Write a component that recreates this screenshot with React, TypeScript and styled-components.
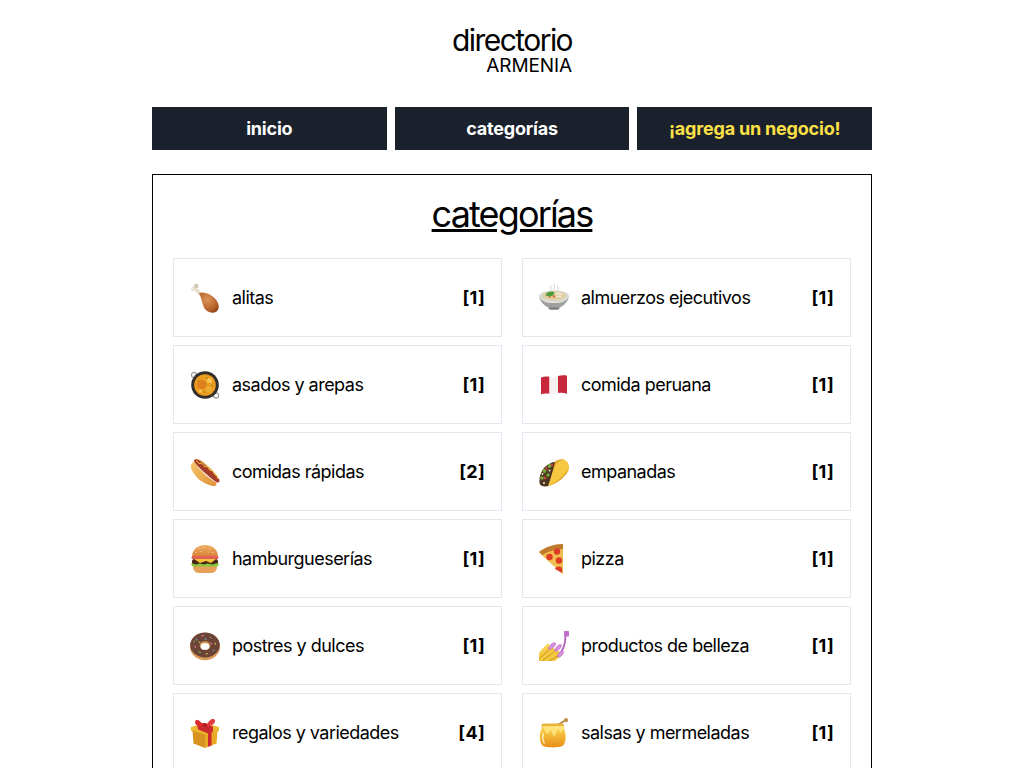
import React from "react";
import styled, { createGlobalStyle } from "styled-components";

const Global = createGlobalStyle`
  html, body { margin: 0; padding: 0; background: #fff; overflow: hidden; height: 768px; }
  body { font-family: Inter, "Liberation Sans", sans-serif; color: #000; }
  * { box-sizing: border-box; }
`;

const Page = styled.div`
  width: 720px;
  margin: 0 auto;
`;
const Header = styled.header`
  display: flex;
  justify-content: center;
  padding-top: 24px;
`;
const Brand = styled.a`
  display: flex;
  flex-direction: column;
  align-items: flex-end;
  color: #000;
  text-decoration: none;
`;
const BrandName = styled.span`
  font-size: 30px;
  line-height: 32px;
  letter-spacing: -1.55px;
`;
const BrandCity = styled.span`
  font-size: 19px;
  line-height: 19px;
  letter-spacing: -0.1px;
`;
const Nav = styled.nav`
  display: flex;
  gap: 8px;
  margin-top: 32px;
`;
const NavItem = styled.a<{ $accent?: boolean }>`
  flex: 1;
  height: 43px;
  display: flex;
  align-items: center;
  justify-content: center;
  background: #1a202c;
  color: ${(p) => (p.$accent ? "#fde047" : "#fff")};
  font-size: 18px;
  font-weight: 700;
  letter-spacing: -0.2px;
`;
const Panel = styled.main`
  margin-top: 24px;
  border: 1px solid #000;
  padding: 19px 20px 40px;
`;
const Title = styled.h1`
  margin: 0 0 24px;
  font-size: 36px;
  line-height: 40px;
  font-weight: 400;
  text-align: center;
  text-decoration: underline;
  letter-spacing: -1.85px;
`;
const Grid = styled.div`
  display: grid;
  grid-template-columns: 1fr 1fr;
  column-gap: 20px;
  row-gap: 8px;
`;
const Card = styled.a`
  height: 79px;
  display: flex;
  align-items: center;
  border: 1px solid #e2e8f0;
  padding: 0 16px;
  font-size: 18px;
  letter-spacing: -0.52px;
`;
const IconBox = styled.svg`
  width: 30px;
  height: 30px;
  flex: none;
  margin-right: 12px;
`;
const Name = styled.span`
  flex: 1;
`;
const Count = styled.span`
  font-weight: 700;
  letter-spacing: 0.3px;
`;

const Chicken = () => (
  <IconBox viewBox="0 0 30 30">
    <defs>
      <radialGradient id="ch" cx="0.42" cy="0.35" r="0.75">
        <stop offset="0" stopColor="#dd9457" />
        <stop offset="0.65" stopColor="#b8662c" />
        <stop offset="1" stopColor="#8a3f16" />
      </radialGradient>
    </defs>
    <path d="M4.500 5 L11 11.500" stroke="#e6ddcc" strokeWidth="3.400" strokeLinecap="round" />
    <circle cx="3.200" cy="6" r="2.300" fill="#ece5d7" />
    <circle cx="6.200" cy="3" r="2.300" fill="#d0c7b6" />
    <path d="M9 10.500 C13 7.800 19.500 10.500 24.500 15 C29.500 19.500 30 26 26.500 28.500 C22.500 31 16.500 29.500 14 24.500 C12 20 11.500 14.500 9 10.500Z" fill="url(#ch)" />
  </IconBox>
);
const Paella = () => (
  <IconBox viewBox="0 0 30 30">
    <circle cx="4" cy="5" r="2.600" fill="none" stroke="#9c9c9c" strokeWidth="1.200" />
    <circle cx="26" cy="25.500" r="2.600" fill="none" stroke="#9c9c9c" strokeWidth="1.200" />
    <circle cx="15" cy="15" r="13.800" fill="#332e2c" />
    <circle cx="15" cy="15" r="10.800" fill="#ee9c20" />
    <circle cx="11.500" cy="14.500" r="4.800" fill="#e07f1e" />
    <circle cx="19.500" cy="10.500" r="2.600" fill="#f6c650" />
    <circle cx="19" cy="19.500" r="2.800" fill="#eaae34" />
    <circle cx="10.500" cy="21" r="1.700" fill="#f6c050" />
    <path d="M16 7l2 2M21 15l2 1M14 21l1 2M8 10l1 1M15 13l1 1.500" stroke="#6e8a2d" strokeWidth="0.900" />
  </IconBox>
);
const HotDog = () => (
  <IconBox viewBox="0 0 30 30">
    <defs>
      <linearGradient id="bun" x1="0" y1="0" x2="1" y2="1">
        <stop offset="0" stopColor="#f6c56c" />
        <stop offset="1" stopColor="#df9138" />
      </linearGradient>
    </defs>
    <path d="M4.500 3 C8 .5 13 4 18 9 C23 14 28 18 28.500 23 C25 18 12 6 4.500 3Z" fill="#eaac4e" />
    <path d="M5 2.500 C7 1.500 9.500 3.500 12 5.500 C18 10 25 16.500 29 22 C30.500 24.500 28.500 26.500 26 25 C19 20 10 12 4.500 5.500 C3.500 4 3.800 3.200 5 2.500Z" fill="#a53d2a" />
    <path d="M6 3.500 L10 7 L11.500 5.800 L15 10 L17 9 L20 13.500 L22 13 L25 18 L26.500 18 L28 22" fill="none" stroke="#edc745" strokeWidth="1" />
    <path d="M1 11 C.500 7.500 2 4.500 4.500 5.500 C10 13 18 21 26 25.500 C27.500 27.500 25.500 29.800 22.500 29 C13 27 4 20 1 11Z" fill="url(#bun)" />
  </IconBox>
);
const Burger = () => (
  <IconBox viewBox="0 0 30 30">
    <defs>
      <linearGradient id="top" x1="0" y1="0" x2="0" y2="1">
        <stop offset="0" stopColor="#efb067" />
        <stop offset="1" stopColor="#d97f34" />
      </linearGradient>
    </defs>
    <path d="M2 13 C2 5 8 1 15 1 C22 1 28 5 28 13Z" fill="url(#top)" />
    <rect x="1.500" y="12" width="27" height="3.200" rx="1.600" fill="#e35f57" />
    <rect x="2" y="15" width="26" height="6" rx="2.600" fill="#4a2416" />
    <path d="M4 15 H26 L21 19 L16 17 L10 19Z" fill="#f6c43a" />
    <path d="M1 20 C3 18.500 5 21.500 8 20 C11 18.500 13 21.500 16 20 C19 18.500 22 21.500 24 20 C26 19 28 19 29 20 C28 23 26 23 24 23 H6 C3 23 2 22.500 1 20Z" fill="#86c83c" />
    <path d="M3 22.500 H27 C27 27 24 29 21 29 H9 C6 29 3 27 3 22.500Z" fill="#e7a05c" />
    <g fill="#f9e5bd"><circle cx="9" cy="4.500" r=".5" /><circle cx="14" cy="3.500" r=".5" /><circle cx="20" cy="5" r=".5" /><circle cx="11" cy="7.500" r=".5" /><circle cx="18" cy="8" r=".5" /><circle cx="23" cy="8.500" r=".5" /><circle cx="6" cy="8.500" r=".5" /></g>
  </IconBox>
);
const Donut = () => (
  <IconBox viewBox="0 0 30 30">
    <ellipse cx="15" cy="15.500" rx="15" ry="13.800" fill="#d89c58" />
    <ellipse cx="15" cy="14" rx="14.700" ry="12.400" fill="#6b4337" />
    <path d="M1.500 17c2 3 3 1 5 4s3 2 5 3 4 1 6 0 4 0 5-2 3-1 6-5" fill="none" stroke="#6b4337" strokeWidth="2.400" />
    <ellipse cx="15" cy="14.500" rx="5.400" ry="4.500" fill="#c58a48" />
    <ellipse cx="15" cy="15.400" rx="4.400" ry="3.400" fill="#fff" />
    <g strokeWidth="1" strokeLinecap="round">
      <path d="M6 8l1.400 1" stroke="#5db5d8" /><path d="M12 5l1.400-.3" stroke="#ed8fb0" /><path d="M20 6l1 1" stroke="#7cc96a" />
      <path d="M25 12l.3 1.400" stroke="#e8d25c" /><path d="M5 15l.4 1.400" stroke="#ed8fb0" /><path d="M23 20l1-1" stroke="#5db5d8" />
      <path d="M9 21l1.300.4" stroke="#7cc96a" /><path d="M16 23l1.400-.3" stroke="#e8d25c" /><path d="M9 11l1 .7" stroke="#e8d25c" />
      <path d="M21 12l.6 1" stroke="#ed8fb0" /><path d="M15 8l1.300.3" stroke="#5db5d8" /><path d="M4 11l.6-1" stroke="#7cc96a" />
    </g>
  </IconBox>
);
const Gift = () => (
  <IconBox viewBox="0 0 30 30">
    <path d="M1 9 L15 5 L29 9 V13 L15 17 L1 13Z" fill="#edb730" />
    <path d="M2.500 12.500 L15 16.500 V30 L3.500 25.500Z" fill="#d89222" />
    <path d="M27.500 12.500 L15 16.500 V30 L26.500 25.500Z" fill="#e9a925" />
    <path d="M7 6.800 L13 5 L23 8.500 V13.800 L21.500 14.300 V27.500 L18 28.800 V15.500 L8 11.500Z" fill="#cc2a2e" />
    <path d="M9 2.500 C5.500 0 4 4 6 6.500 C8 8.500 12 8 14.500 7.500 C12.500 6 11 4 9 2.500Z" fill="#dc2c30" />
    <path d="M21 1.500 C24.500 0 26.500 3 24 5.500 C22 7.800 18 8 15.500 7.500 C17 6 19 3 21 1.500Z" fill="#e43a3c" />
    <circle cx="15" cy="7" r="2" fill="#ad1e22" />
  </IconBox>
);
const Bowl = () => (
  <IconBox viewBox="0 0 30 30">
    <path d="M12 2c-1.500 2 1 3 0 5M15.500 1c-1.500 2 1 3 0 5.500M19 2.500c-1.500 2 1 3 0 5" stroke="#d8d8d4" strokeWidth="1.100" fill="none" />
    <ellipse cx="15" cy="13.500" rx="15" ry="6.300" fill="#dadad6" />
    <ellipse cx="15" cy="12.800" rx="12" ry="4.600" fill="#e0cfa4" />
    <path d="M6.500 12c2-3.500 6-4 8.500-2.800 1 1.500-1 3.500-3.500 4-2.500.5-4 0-5-1.200Z" fill="#4f9a3a" />
    <circle cx="15" cy="13.500" r="1.300" fill="#d8763a" />
    <circle cx="11" cy="14" r="1" fill="#d8763a" />
    <path d="M16 11c3-1 6-.5 7 1M17 13.500c2-.5 4-.5 5 .3" stroke="#f6efdc" strokeWidth="1.200" fill="none" />
    <path d="M0 14 C2 21 8 24 10 25 H20 C22 24 28 21 30 14 C27 19 21 20 15 20 C9 20 3 19 0 14Z" fill="#a0a09e" />
    <ellipse cx="15" cy="25.500" rx="5.500" ry="1.300" fill="#7c7c7a" />
  </IconBox>
);
const Flag = () => (
  <IconBox viewBox="0 0 30 30">
    <path d="M2 7.500 C5 6.300 8 6.300 10.500 6.800 V23.800 C8 23.300 5 23.300 2 24.200Z" fill="#c8283c" />
    <path d="M10.500 6.800 C13 7.300 15.500 7 19 6 V23 C16 23.900 13 24.200 10.500 23.800Z" fill="#f7f2f2" />
    <path d="M19 6 C22 5.200 25 5 28 5.700 V23.700 C25 22.800 22 22.200 19 23Z" fill="#c8283c" />
  </IconBox>
);
const Taco = () => (
  <IconBox viewBox="0 0 30 30">
    <path d="M14 6 C17 3 22 1.500 25 2.500 L28 8 L12 20Z" fill="#e8a92e" />
    <path d="M0.500 26 C0 20 2 14 6 10 C9 7 13 5 16 5 L10 29 C6 30 1 29.500 0.500 26Z" fill="#4f3620" />
    <g fill="#72aa3a"><circle cx="5.500" cy="14" r="1.900" /><circle cx="10.500" cy="9" r="2" /><circle cx="3" cy="21" r="1.800" /><circle cx="9" cy="18" r="1.700" /></g>
    <g fill="#d1473a"><circle cx="7.500" cy="11.500" r="1.200" /><circle cx="6" cy="21" r="1.400" /><circle cx="13" cy="8" r="1.200" /></g>
    <g fill="#efe7d0"><circle cx="3.500" cy="17" r=".9" /><circle cx="10.500" cy="13.500" r="1" /><circle cx="5" cy="26" r="1" /></g>
    <path d="M9 29 C11.500 23 13 16 15.500 10.500 C17.500 6 21.500 3 25 3 C28 3.200 30.500 7 30 11.500 C28.500 18 18.500 27 9 29Z" fill="#f6c842" />
    <path d="M9 29 C18 25.500 26 18 30 11.500 C28.500 18 18.500 27 9 29Z" fill="#d69a28" />
  </IconBox>
);
const Pizza = () => (
  <IconBox viewBox="0 0 30 30">
    <path d="M0 8 C6 3 16 0 24 0 L24 30 C23 29 5 14 0 8Z" fill="#f2bd50" />
    <path d="M0 8 C6 3 16 0 24 0 V5 C16 5 8 8 3.500 11Z" fill="#c07a2e" />
    <circle cx="10.500" cy="13" r="3.200" fill="#dc3c24" />
    <circle cx="18" cy="7.500" r="3.200" fill="#dc3c24" />
    <circle cx="20" cy="16.500" r="3.200" fill="#dc3c24" />
    <path d="M16 25 C17 22 21 22 23 24 V29 Z" fill="#dc3c24" />
  </IconBox>
);
const Nails = () => (
  <IconBox viewBox="0 0 30 30">
    <path d="M26.500 5 C26.500 14 24 20 19 24" stroke="#b45cc0" strokeWidth="1.800" fill="none" />
    <rect x="25" y="0" width="5" height="5.500" rx=".6" fill="#c56ed0" />
    <path d="M0 22 L9 14 L24 23 L16 30 H0Z" fill="#f4c93f" />
    <path d="M0 28 L11 18 M3 30 L15 21 M10 30 L20 24" stroke="#c89420" strokeWidth="1" />
    <ellipse cx="13" cy="15" rx="1.900" ry="4.500" transform="rotate(50 13 15)" fill="#d98fdc" stroke="#a456b0" strokeWidth=".4" />
    <ellipse cx="19" cy="17" rx="1.900" ry="4.500" transform="rotate(45 19 17)" fill="#d98fdc" stroke="#a456b0" strokeWidth=".4" />
    <ellipse cx="21.500" cy="23" rx="1.900" ry="4" transform="rotate(40 21.500 23)" fill="#d98fdc" stroke="#a456b0" strokeWidth=".4" />
    <path d="M1 20 L9 12.500 L11 15 L3 22Z" fill="#f6d04e" />
  </IconBox>
);
const Honey = () => (
  <IconBox viewBox="0 0 30 30">
    <defs>
      <linearGradient id="ho" x1="0" y1="0" x2="0" y2="1">
        <stop offset="0" stopColor="#fbd650" />
        <stop offset="1" stopColor="#e88f18" />
      </linearGradient>
    </defs>
    <path d="M17 8 L26 2.500" stroke="#b98344" strokeWidth="1.600" />
    <circle cx="27" cy="2.200" r="2.100" fill="#c4904e" />
    <path d="M3.500 9 C0 14 0 24 3.500 27.500 C6 30 21 30 24 27.500 C27.500 24 27.500 14 24 9Z" fill="url(#ho)" />
    <rect x="2.500" y="5.500" width="22.500" height="5" rx="2" fill="#e9b33b" />
    <path d="M3 8 H24.500 V11 L21.500 15 L19 11 L15 19 L12 12 L8 16 L5 11Z" fill="#ffe27a" />
    <path d="M4.500 15 C3.500 18 3.500 22 5.500 25.500" stroke="#fff3c0" strokeWidth="1.400" fill="none" />
  </IconBox>
);

const rows: [React.FC, string, number][] = [
  [Chicken, "alitas", 1],
  [Bowl, "almuerzos ejecutivos", 1],
  [Paella, "asados y arepas", 1],
  [Flag, "comida peruana", 1],
  [HotDog, "comidas rápidas", 2],
  [Taco, "empanadas", 1],
  [Burger, "hamburgueserías", 1],
  [Pizza, "pizza", 1],
  [Donut, "postres y dulces", 1],
  [Nails, "productos de belleza", 1],
  [Gift, "regalos y variedades", 4],
  [Honey, "salsas y mermeladas", 1],
];

export default function App() {
  return (
    <Page>
      <Global />
      <Header>
        <Brand>
          <BrandName>directorio</BrandName>
          <BrandCity>ARMENIA</BrandCity>
        </Brand>
      </Header>
      <Nav>
        <NavItem>inicio</NavItem>
        <NavItem>categorías</NavItem>
        <NavItem $accent>¡agrega un negocio!</NavItem>
      </Nav>
      <Panel>
        <Title>categorías</Title>
        <Grid>
          {rows.map(([Icon, name, n]) => (
            <Card key={name}>
              <Icon />
              <Name>{name}</Name>
              <Count>[{n}]</Count>
            </Card>
          ))}
        </Grid>
      </Panel>
    </Page>
  );
}
